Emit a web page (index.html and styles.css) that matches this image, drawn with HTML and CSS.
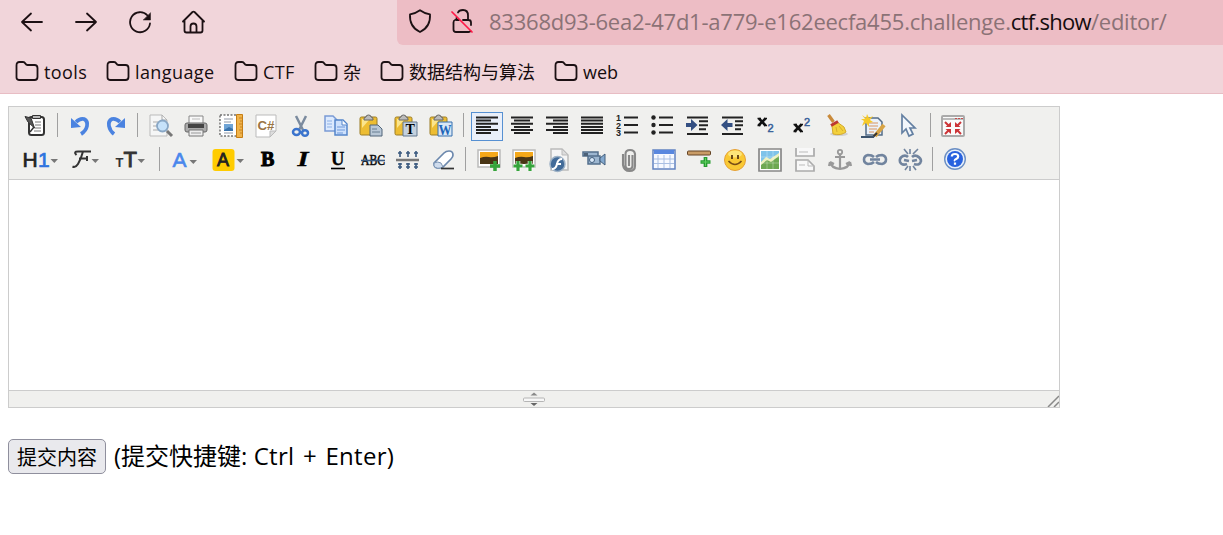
FILE: index.html
```
<!DOCTYPE html>
<html lang="zh-CN">
<head>
  <meta charset="UTF-8" />
  <title>editor</title>
  <link rel="stylesheet" href="styles.css">
</head>
<body>

<header class="browser">
  <div class="navbar">
    <div class="nav-buttons">
      <svg viewBox="0 0 24 24"><path d="M22 12H2M11 3.500L2 12l9 8.500"/></svg>
      <svg viewBox="0 0 24 24"><path d="M2 12h20M13 3.500l9 8.500-9 8.500"/></svg>
      <svg viewBox="0 0 24 24"><path d="M22 13.500A10 10 0 1 1 19.500 5.500"/><path class="solid" d="M22.500 3v7H15.500z"/></svg>
      <svg viewBox="0 0 24 24"><path d="M1 11.500L10.500 2q1-.8 2 0l9.500 9.500M2.500 10v10.500q0 2 2 2h14q2 0 2-2V10M8.500 22v-5.500q0-3 3-3t3 3v5.500"/></svg>
    </div>
    <div class="urlbar">
      <svg viewBox="0 0 24 24"><path d="M12 1.200Q16.500 4.500 22 5.300C22.500 13 19.500 19.500 12 23 4.500 19.500 1.500 13 2 5.300Q7.500 4.500 12 1.200z"/></svg>
      <svg class="lock" viewBox="0 0 24 24"><path d="M8 3.500Q9 1 13 1q5 0 5 5.500V11h.5q2.500 0 2.500 2.500V16M13 11h5M5 11q-1.500.5-1.500 2.500v7q0 2.500 2.500 2.500h12.500q1.500 0 2-1M6.500 9v2H9"/><path class="slash" d="M2 3l20 20"/></svg>
      <div class="url">83368d93-6ea2-47d1-a779-e162eecfa455.challenge.<b>ctf.show</b>/editor/</div>
    </div>
  </div>
  <div class="bookmarks">
    <div><svg viewBox="0 0 24 20"><path d="M1.500 16.500v-12Q1.500 1 4.500 1H8q1.500 0 2.500 1.800Q11.200 4 12.500 4h7Q22.500 4 22.500 7v9q0 3-3 3h-15q-3 0-3-2.500z"/></svg>tools</div>
    <div><svg viewBox="0 0 24 20"><path d="M1.500 16.500v-12Q1.500 1 4.500 1H8q1.500 0 2.500 1.800Q11.200 4 12.500 4h7Q22.500 4 22.500 7v9q0 3-3 3h-15q-3 0-3-2.500z"/></svg>language</div>
    <div><svg viewBox="0 0 24 20"><path d="M1.500 16.500v-12Q1.500 1 4.500 1H8q1.500 0 2.500 1.800Q11.200 4 12.500 4h7Q22.500 4 22.500 7v9q0 3-3 3h-15q-3 0-3-2.500z"/></svg>CTF</div>
    <div><svg viewBox="0 0 24 20"><path d="M1.500 16.500v-12Q1.500 1 4.500 1H8q1.500 0 2.500 1.800Q11.200 4 12.500 4h7Q22.500 4 22.500 7v9q0 3-3 3h-15q-3 0-3-2.500z"/></svg><span class="cjk">杂</span></div>
    <div><svg viewBox="0 0 24 20"><path d="M1.500 16.500v-12Q1.500 1 4.500 1H8q1.500 0 2.500 1.800Q11.200 4 12.500 4h7Q22.500 4 22.500 7v9q0 3-3 3h-15q-3 0-3-2.500z"/></svg><span class="cjk">数据结构与算法</span></div>
    <div><svg viewBox="0 0 24 20"><path d="M1.500 16.500v-12Q1.500 1 4.500 1H8q1.500 0 2.500 1.800Q11.200 4 12.500 4h7Q22.500 4 22.500 7v9q0 3-3 3h-15q-3 0-3-2.500z"/></svg><span class="cjk">web</span></div>
  </div>
</header>

<main>
  <div class="editor">
    <div class="toolbar">
      <div class="row">
        <!-- source -->
        <span class="btn"><svg viewBox="0 0 24 24"><rect x="6" y="3" width="15" height="18" rx="2.500" fill="#fff" stroke="#333" stroke-width="2"/><path d="M9.500 4.500v-3h8v3z" fill="#bbb" stroke="#333"/><path d="M12 8h6M12 11h6M12 14h6M11 17h7" stroke="#777"/><path d="M2 2.500l6 1.500 3.500 10L5 8z" fill="#555" stroke="#333"/><path d="M11 13l-4 5" stroke="#333" stroke-width="1.500"/></svg></span>
        <span class="sep"></span>
        <!-- undo / redo -->
        <span class="btn"><svg viewBox="0 0 24 24"><path d="M8 8q4-4 8-3 4 2 3 7-1 5-6 8" fill="none" stroke="#4b83e0" stroke-width="3.800"/><path d="M3 4v10l10-1z" fill="#4b83e0"/></svg></span>
        <span class="btn"><svg viewBox="0 0 24 24"><path d="M17 8q-4-4-8-3-4 2-3 7 1 5 5 8" fill="none" stroke="#4b83e0" stroke-width="3.800"/><path d="M22 4v10l-10-1z" fill="#4b83e0"/></svg></span>
        <span class="sep"></span>
        <!-- preview -->
        <span class="btn"><svg viewBox="0 0 24 24"><path d="M1 1h12l5 5v16H1z" fill="#f5f6f6" stroke="#bbb"/><path d="M13 1v5h5M4 8h5M4 12h4M4 16h5" fill="none" stroke="#aaa"/><circle cx="13.500" cy="12" r="5.500" fill="#c6e2fa" stroke="#89a7c5" stroke-width="1.800"/><path d="M18 17l5 5" stroke="#777" stroke-width="3"/></svg></span>
        <!-- print -->
        <span class="btn"><svg viewBox="0 0 24 24"><path d="M5 2h14v8H5z" fill="#f9f9f9" stroke="#888"/><path d="M8 5h8" stroke="#bbb"/><rect x="1" y="9" width="22" height="9" rx="2" fill="#aaa" stroke="#666"/><path d="M4 10h16v4H4z" fill="#444"/><path d="M5 16h14v6H5z" fill="#eee" stroke="#777"/><path d="M7 19h10" stroke="#999"/></svg></span>
        <!-- template -->
        <span class="btn"><svg viewBox="0 0 24 24"><rect x="1" y="1" width="17" height="21" fill="#fff" stroke="#333" stroke-dasharray="2 1.500"/><path d="M5 5h9M5 8h7M5 19h9" stroke="#b7bcc5" stroke-width="1.500"/><path d="M5 10h9v7H5z" fill="#6fa4d5"/><path d="M5 16l5-3 4 2v2H5z" fill="#3973ac"/><path d="M17.500 .5h6v23h-6z" fill="#f0b34a" stroke="#c67e14"/><path d="M20 4h3M21 7h2M20 10h3M21 13h2M20 16h3M21 19h2" stroke="#c98422"/></svg></span>
        <!-- code -->
        <span class="btn"><svg viewBox="0 0 24 24"><path d="M2 1h20v16l-6 6H2z" fill="#fff" stroke="#bbb"/><path d="M16 23v-6h6z" fill="#ddd" stroke="#bbb"/><text x="3.500" y="16" font-size="12" font-weight="bold" fill="#9a7546" textLength="17" lengthAdjust="spacingAndGlyphs">C#</text></svg></span>
        <!-- cut -->
        <span class="btn"><svg viewBox="0 0 24 24"><path d="M7 2l7 14M17 2l-7 14" stroke="#7b8b9e" stroke-width="2.500"/><ellipse cx="7.500" cy="18" rx="3.500" ry="3" fill="none" stroke="#3b74cd" stroke-width="2.500"/><ellipse cx="16" cy="19" rx="3" ry="2.800" fill="none" stroke="#3b74cd" stroke-width="2.500"/></svg></span>
        <!-- copy -->
        <span class="btn"><svg viewBox="0 0 24 24"><path d="M1 2h8l4 4v11H1z" fill="#dceafe" stroke="#7a9bd5" stroke-width="1.500"/><path d="M3 7h5M3 10h5M3 13h5" stroke="#8db0e5"/><path d="M11 6h8l4 4v11H11z" fill="#cee1fc" stroke="#5485ca" stroke-width="1.500"/><path d="M18 6v5h5" fill="#fff" stroke="#5485ca"/><path d="M13 13h8M13 16h8M13 19h6" stroke="#6e99da"/></svg></span>
        <!-- paste -->
        <span class="btn"><svg viewBox="0 0 24 24"><rect x="1" y="3" width="17" height="18" rx="1.500" fill="#edbd32" stroke="#9b7c26"/><path d="M3 5l8 0-8 9z" fill="#fbe58d"/><path d="M5 5q0-2 2-2 0-2 2.500-2T12 3q2 0 2 2v1H5z" fill="#bbb" stroke="#666"/><path d="M11 11h8l4 4v7H11z" fill="#b9c8d7" stroke="#506579"/><path d="M13 15h5M13 18h8" stroke="#697e92"/></svg></span>
        <!-- paste plain text -->
        <span class="btn"><svg viewBox="0 0 24 24"><rect x="1" y="3" width="17" height="18" rx="1.500" fill="#edbd32" stroke="#9b7c26"/><path d="M3 5l8 0-8 9z" fill="#fbe58d"/><path d="M5 5q0-2 2-2 0-2 2.500-2T12 3q2 0 2 2v1H5z" fill="#bbb" stroke="#666"/><path d="M9 8h14v14H9z" fill="#c4d1de" stroke="#637991"/><text class="serif" x="11.500" y="20" font-size="14" font-weight="bold">T</text></svg></span>
        <!-- paste from word -->
        <span class="btn"><svg viewBox="0 0 24 24"><rect x="1" y="3" width="17" height="18" rx="1.500" fill="#edbd32" stroke="#9b7c26"/><path d="M3 5l8 0-8 9z" fill="#fbe58d"/><path d="M5 5q0-2 2-2 0-2 2.500-2T12 3q2 0 2 2v1H5z" fill="#bbb" stroke="#666"/><path d="M9 8h14v14H9z" fill="#d9e7f5" stroke="#356fae"/><text class="serif" x="9.500" y="20.500" font-size="15" font-weight="bold" fill="#2165b8" textLength="13" lengthAdjust="spacingAndGlyphs">W</text></svg></span>
        <span class="sep"></span>
        <!-- alignment -->
        <span class="btn selected"><svg class="lines" viewBox="0 0 24 24"><path d="M1 3.500h22M1 6.500h15M1 9.800h22M1 13h15M1 16h22M1 19h15"/></svg></span>
        <span class="btn"><svg class="lines" viewBox="0 0 24 24"><path d="M1 3.500h22M4 6.500h16M1 9.800h22M4 13h16M1 16h22M4 19h16"/></svg></span>
        <span class="btn"><svg class="lines" viewBox="0 0 24 24"><path d="M1 3.500h22M8 6.500h15M1 9.800h22M8 13h15M1 16h22M8 19h15"/></svg></span>
        <span class="btn"><svg class="lines" viewBox="0 0 24 24"><path d="M1 3.500h22M1 6.500h22M1 9.800h22M1 13h22M1 16h22M1 19h22"/></svg></span>
        <!-- lists -->
        <span class="btn"><svg class="lines" viewBox="0 0 24 24"><path d="M9 3.500h14M9 11h14M9 18.500h14"/><g class="nums"><text x="1" y="7">1</text><text x="1" y="14.500">2</text><text x="1" y="22">3</text></g></svg></span>
        <span class="btn"><svg class="lines" viewBox="0 0 24 24"><path d="M9 3.500h14M9 11h14M9 18.500h14"/><circle cx="3.500" cy="3.500" r="2.200"/><circle cx="3.500" cy="11" r="2.200"/><circle cx="3.500" cy="18.500" r="2.200"/></svg></span>
        <!-- indent -->
        <span class="btn"><svg class="lines" viewBox="0 0 24 24"><path d="M2 3.500h21M14 7.300h9M14 11.300h9M14 15.300h7M2 20h21"/><path class="arrow" d="M1 9h5V5l6.500 6L6 17v-4H1z"/></svg></span>
        <span class="btn"><svg class="lines" viewBox="0 0 24 24"><path d="M2 3.500h21M15 7.300h8M15 11.300h8M15 15.300h6M2 20h21"/><path class="arrow" d="M12.500 9h-5V5L1 11l6.500 6v-4h5z"/></svg></span>
        <!-- subscript / superscript -->
        <span class="btn"><svg viewBox="0 0 24 24"><path d="M4 4.500l6.500 7M10.500 4.500l-7 7" stroke="#111" stroke-width="2.600"/><path d="M2.500 4.500h3.500M9 4.500h3M2.500 11.500h3M9 11.500h3" stroke="#111" stroke-width="1.600"/><text x="12.500" y="18" font-size="11" fill="#375f99" stroke="#375f99" stroke-width=".5">2</text></svg></span>
        <span class="btn"><svg viewBox="0 0 24 24"><path d="M4 10.500l6.500 7M10.500 10.500l-7 7" stroke="#111" stroke-width="2.600"/><path d="M2.500 10.500h3.500M9 10.500h3M2.500 17.500h3M9 17.500h3" stroke="#111" stroke-width="1.600"/><text x="13" y="12" font-size="11" fill="#375f99" stroke="#375f99" stroke-width=".5">2</text></svg></span>
        <!-- clear format -->
        <span class="btn"><svg viewBox="0 0 24 24"><ellipse cx="13" cy="20" rx="9" ry="2" fill="#d2d2d2"/><path d="M2.500 1l5 7" stroke="#c98a3a" stroke-width="3.200"/><path d="M11 8l7 5 2 5q-5 4-13 2l-1-8z" fill="#f3d13c" stroke="#d3a92c"/><path d="M5 11.500l7-4" stroke="#bd3930" stroke-width="3"/><path d="M10 13l1 5M13 12l4 5" stroke="#d6ae2c"/></svg></span>
        <!-- quick format -->
        <span class="btn"><svg viewBox="0 0 24 24"><path d="M5 4h12l4 4v13H5z" fill="#eaf1fa" stroke="#536c88" stroke-width="1.500"/><path d="M8 9h9M8 12h9M8 15h8M8 18h5" stroke="#d89460"/><path d="M1 1l4 3 1-4 2 4 4-2-3 4 3 2-4 1v4L5 9l-4 3 2-5-3-2h4z" fill="#f6c928"/><path d="M23 11l-9 11" stroke="#d8a445" stroke-width="4"/><path d="M16 19l-4 4" stroke="#333" stroke-width="2"/><path d="M0 23h13" stroke="#3d546e" stroke-width="2"/></svg></span>
        <!-- select all -->
        <span class="btn"><svg viewBox="0 0 24 24"><path d="M6 1v18l4-4 3 7 4-2-3-6h5z" fill="#f3f7fc" stroke="#6480a2" stroke-width="1.700"/></svg></span>
        <span class="sep"></span>
        <!-- fullscreen -->
        <span class="btn"><svg viewBox="0 0 24 24"><rect x="1" y="2" width="22" height="20" rx="1" fill="#fafafa" stroke="#aaa" stroke-width="2"/><path d="M2 5h20" stroke="#bbb" stroke-width="2"/><path d="M14 4.500h2M17 4.500h2M20 4.500h2" stroke="#c54c4c"/><path d="M10 8v5H4.500zM14 8v5h5.500zM10 20v-5H4.500zM14 20v-5h5.500z" fill="#cc3437"/><path d="M4 8l4 4M20 8l-4 4M4 20l4-4M20 20l-4-4" stroke="#cc3437" stroke-width="2"/></svg></span>
      </div>
      <div class="row">
        <span class="btn wide"><svg viewBox="0 0 36 24"><text x="-.5" y="18.500" font-size="21" fill="#222" stroke="#222" stroke-width=".7">H<tspan x="15" fill="#2f73df" stroke="#2f73df">1</tspan></text><path d="M27.500 11h7.500l-3.700 4z" fill="#777"/></svg></span>
        <span class="btn wide"><svg viewBox="0 0 36 24"><path d="M8.500 7Q5 3.500 10 3.500h13M15 3.500Q13 11 10 16q-2.500 4-5.500 2.500M11 10.500h8M19 8v5" fill="none" stroke="#333" stroke-width="2"/><path d="M23.500 11h7.500l-3.700 4z" fill="#777"/></svg></span>
        <span class="btn wide"><svg viewBox="0 0 36 24"><text x="1.500" y="18.500" font-size="13" font-weight="bold" fill="#333">T</text><text x="9.500" y="18.500" font-size="22" fill="#333" stroke="#333" stroke-width=".9">T</text><path d="M23.500 11h7.500l-3.700 4z" fill="#777"/></svg></span>
        <span class="sep"></span>
        <span class="btn color"><svg viewBox="0 0 33 24"><text x="2.500" y="19" font-size="21" fill="#4987ec" stroke="#4987ec" stroke-width=".6">A</text><path d="M19.500 12h7.500l-3.700 4z" fill="#777"/></svg></span>
        <span class="btn color"><svg viewBox="0 0 33 24"><rect x="-.5" width="22" height="22" y="1" rx="3" fill="#fc0"/><text x="4" y="18" font-size="18" fill="#222" stroke="#222" stroke-width=".8">A</text><path d="M23.500 11h7.500l-3.700 4z" fill="#777"/></svg></span>
        <span class="btn"><svg viewBox="0 0 24 24"><text class="serif" x="5" y="18" font-size="20" font-weight="bold" stroke="#000" stroke-width="1">B</text></svg></span>
        <span class="btn"><svg viewBox="0 0 24 24"><text class="serif" x="6.500" y="18" font-size="20" font-weight="bold" font-style="italic" stroke="#000" stroke-width=".4" textLength="11" lengthAdjust="spacingAndGlyphs">I</text></svg></span>
        <span class="btn"><svg viewBox="0 0 24 24"><text class="serif" x="5" y="17" font-size="18.500" font-weight="bold" stroke="#000" stroke-width=".3">U</text><path d="M5 20.500h14" stroke="#000" stroke-width="1.600"/></svg></span>
        <span class="btn"><svg viewBox="0 0 24 24"><text class="serif" x="0" y="16.500" font-size="14" textLength="24" lengthAdjust="spacingAndGlyphs" stroke="#111" stroke-width=".5">ABC</text><path d="M0 12.500h24" stroke="#3b5b82" stroke-width="1.600"/></svg></span>
        <!-- line height -->
        <span class="btn"><svg viewBox="0 0 24 24"><path d="M0 12h23" stroke="#777" stroke-width="2.500"/><path d="M4 3v6M12 3v6M20 3v6M4 15v6M12 15v6M20 15v6M2 5h4M10 5h4M18 5h4M2 19h4M10 19h4M18 19h4M2 16h4M10 16h4M18 16h4" stroke="#3a597e" stroke-width="1.600"/></svg></span>
        <!-- eraser -->
        <span class="btn"><svg viewBox="0 0 24 24"><path d="M2 15L12 5q2-2 5-2 4 0 4 4 0 2-2 4l-8 8q-2 1-5 1-4 0-4-5z" fill="#fff" stroke="#6c88ad" stroke-width="1.700"/><path d="M2 15q4-2 7 0l2 4q-6 3-9-1z" fill="#cfdced" stroke="#7892b2"/><path d="M9 20.500h13" stroke="#333" stroke-width="1.700"/></svg></span>
        <span class="sep"></span>
        <!-- image / multi image -->
        <span class="btn"><svg viewBox="0 0 24 24"><path d="M1 2h22v17H1z" fill="#fff" stroke="#bbb" stroke-width="1.500"/><path d="M3 4h18v12H3z" fill="#f5a819"/><path d="M3 10q5-2 9-1t9-1v8H3z" fill="#493515"/><path d="M18 13v10M13 18h10" stroke="#35a43b" stroke-width="3.500"/></svg></span>
        <span class="btn"><svg viewBox="0 0 24 24"><path d="M1 2h22v17H1z" fill="#fff" stroke="#bbb" stroke-width="1.500"/><path d="M3 4h18v12H3z" fill="#f5a819"/><path d="M3 10q5-2 9-1t9-1v8H3z" fill="#493515"/><path d="M6 13v10M1.500 18h9M18 13v10M13.500 18h9" stroke="#fff" stroke-width="4.500"/><path d="M6 13v10M1.500 18h9M18 13v10M13.500 18h9" stroke="#35a43b" stroke-width="3.200"/></svg></span>
        <!-- flash -->
        <span class="btn"><svg viewBox="0 0 24 24"><path d="M4 1h11l6 6v15H4z" fill="#f5f5f5" stroke="#bbb" stroke-width="1.500"/><path d="M15 1v6h6z" fill="#ddd" stroke="#bbb"/><circle cx="10.500" cy="16" r="7.500" fill="#426b99" stroke="#9eb2c6" stroke-width="1.500"/><path d="M15 11q-4 0-5 5t-5 5M9 16h5" fill="none" stroke="#fff" stroke-width="2"/></svg></span>
        <!-- media -->
        <span class="btn"><svg viewBox="0 0 24 24"><path d="M1 4h15v4H1zM6 8h12v8H6z" fill="#9cb6d0" stroke="#536f8c" stroke-width="1.500"/><path d="M18 10l5-4v11l-5-4z" fill="#83a8ce" stroke="#435f7d"/><path d="M2 5h4v3H2z" fill="#4d6278"/><circle cx="10" cy="12" r="2.500" fill="#d9e9fa" stroke="#435f7d"/></svg></span>
        <!-- attachment -->
        <span class="btn"><svg viewBox="0 0 24 24"><path d="M15.500 7v11q0 3-3.500 3t-3.500-3V6q0-4 4.500-4t5 4v12q0 5-5.500 5T6 17V6M12 7v11" fill="none" stroke="#888" stroke-width="2.100"/></svg></span>
        <!-- table -->
        <span class="btn"><svg viewBox="0 0 24 24"><path d="M1 2h22v19H1z" fill="#f6f9ff" stroke="#6183c1" stroke-width="1.500"/><path d="M2 2h20v4H2z" fill="#5887df"/><path d="M6 7v13M12 7v13M18 7v13M2 11h20M2 15.500h20" stroke="#a9bfe3"/></svg></span>
        <!-- horizontal rule -->
        <span class="btn"><svg viewBox="0 0 24 24"><rect x=".5" y="3" width="23" height="4" rx="1" fill="#c99c66" stroke="#654526"/><path d="M18.500 9v10M13.500 14h10" stroke="#269c30" stroke-width="3.700"/><path d="M18.500 10v8M14.500 14h8" stroke="#61cf61"/></svg></span>
        <!-- emoticon -->
        <span class="btn"><svg viewBox="0 0 24 24"><circle cx="12" cy="12" r="10.500" fill="#f9c934" stroke="#e6a136"/><ellipse cx="12" cy="6" rx="7" ry="3.500" fill="#fde578"/><path d="M9 7v4M15 7v4" stroke="#6a4917" stroke-width="2"/><path d="M5.500 13q6.500 7 13 0" fill="none" stroke="#784e16" stroke-width="1.600"/></svg></span>
        <!-- map -->
        <span class="btn"><svg viewBox="0 0 24 24"><path d="M1 1h22v22H1z" fill="#fff" stroke="#888" stroke-width="1.700"/><path d="M3 3h18v18H3z" fill="#7fc3ea"/><path d="M3 14l5-4 4 2 9-6v15H3z" fill="#6ea852"/><path d="M3 14l5-5 4 2 9-6v3l-8 6-4-2-6 5z" fill="#edf0bd"/><path d="M9 3v18M15 3v18M3 9h18M3 15h18" stroke="#fff" stroke-opacity=".3"/></svg></span>
        <!-- page break -->
        <span class="btn"><svg viewBox="0 0 24 24"><path d="M3 0v8h18V0" fill="#f8f8f8" stroke="#aaa" stroke-width="1.700"/><path d="M3 23V12h12l6 6v5z" fill="#f8f8f8" stroke="#aaa" stroke-width="1.700"/><path d="M15 12v6h6M6 4h9M6 17h6" fill="none" stroke="#bbb"/></svg></span>
        <!-- anchor -->
        <span class="btn"><svg viewBox="0 0 24 24"><circle cx="12" cy="4" r="2.200" fill="none" stroke="#999" stroke-width="1.800"/><path d="M12 6v15M7 9h10M2 14q1 6 10 7 9-1 10-7M2 14l-1 4M2 14l4 2M22 14l1 4M22 14l-4 2" fill="none" stroke="#999" stroke-width="2.200"/></svg></span>
        <!-- link / unlink -->
        <span class="btn"><svg class="chain" viewBox="0 0 24 24"><path d="M11 9Q9 7 5 7q-4 1-4 4.500T5 16q4 0 6-2M13 9q2-2 6-2 4 1 4 4.500T19 16q-4 0-6-2M7 11.500h10"/></svg></span>
        <span class="btn"><svg class="chain" viewBox="0 0 24 24"><path d="M10 9Q8 7 5 8q-4 2-3 6 2 4 7 2M6 12l5 1M14 9q2-2 5-1 4 2 4 5-1 5-7 3M19 12l-5 1"/><path class="thin" d="M12 1v5M6 1l4 5M20 1l-5 5M12 23v-5M7 22l3-4M18 22l-3-4"/></svg></span>
        <span class="sep"></span>
        <!-- help -->
        <span class="btn"><svg viewBox="0 0 24 24"><circle cx="12" cy="11" r="10.300" fill="#e9f1fb" stroke="#6b8fc4" stroke-width="1.400"/><circle cx="12" cy="11" r="8" fill="#2862df"/><path d="M8.800 8.500q0-2.500 3.200-2.500t3.200 2.500q0 1.500-2 2.500T12 13M12 14.500v2.200" fill="none" stroke="#fff" stroke-width="2.200"/></svg></span>
      </div>
    </div>
    <div class="edit-area"></div>
    <div class="statusbar">
      <svg class="center" viewBox="0 0 24 16"><path d="M12 1.500l3.500 3h-7z" fill="#888"/><rect x="1.500" y="7" width="21" height="3.500" rx="1" fill="#f7f7f7" stroke="#b5b5b5"/><path d="M12 15l3.500-3h-7z" fill="#666"/></svg>
      <svg class="grip" viewBox="0 0 12 12"><path d="M1 12L12 1M7 12l5-5" stroke="#888" stroke-width="1.500"/></svg>
    </div>
  </div>

  <div class="submit">
    <button>提交内容</button>
    <span>(提交快捷键: <span class="keys">Ctrl + Enter)</span></span>
  </div>
</main>

</body>
</html>
```
FILE: styles.css
```
body {
  margin: 0;
  background: #fff;
  color: #000;
  font-family: "Open Sans", "Noto Sans CJK SC", sans-serif;
}
svg {
  display: block;
  flex: none;
}
.browser {
  height: 93px;
  background: #f1d5da;
  border-bottom: 1px solid #e8bdc4;
  overflow: hidden;
}
.browser svg {
  width: 24px;
  height: 24px;
  fill: none;
  stroke: #1c1013;
  stroke-width: 1.8;
  stroke-linecap: round;
  stroke-linejoin: round;
}
.browser .solid {
  fill: #1c1013;
  stroke-width: 0.5;
}
.browser .slash {
  stroke: #ff1746;
  stroke-width: 1.7;
}
.navbar {
  display: flex;
  height: 45px;
}
.nav-buttons {
  display: flex;
  gap: 30px;
  width: 377px;
  padding: 10px 0 0 20px;
}
.urlbar {
  display: flex;
  flex: 1;
  gap: 18px;
  padding: 9px 0 0 11px;
  background: #edbdc5;
  border-radius: 0 0 0 6px;
}
.url {
  margin-left: -3px;
  line-height: 24px;
  font-size: 22px;
  letter-spacing: -0.23px;
  white-space: nowrap;
  color: #8b7276;
}
.url b {
  font-weight: normal;
  letter-spacing: -0.7px;
  color: #150c0e;
}
.bookmarks {
  display: grid;
  grid-template-columns: 91px 128px 80px 66px 174px 90px;
  padding: 14px 0 0 15px;
  font-size: 18px;
  letter-spacing: 0.4px;
  line-height: 26px;
  color: #150c0e;
}
.bookmarks div {
  display: flex;
  gap: 5px;
  white-space: nowrap;
}
.bookmarks svg {
  height: 20px;
  margin-top: 2px;
}
.cjk {
  letter-spacing: 0;
}
main {
  padding: 12px 8px 0;
}
.editor {
  width: 1050px;
  border: 1px solid #ccc;
}
.toolbar {
  height: 67px;
  padding: 5px 0 0 8.2px;
  background: #f0f0ee;
  border-bottom: 1px solid #ccc;
}
.row {
  display: flex;
  height: 34px;
}
.btn {
  box-sizing: border-box;
  width: 32px;
  height: 29px;
  margin: 0 1.55px;
  padding: 1px 3px;
  border: 1px solid transparent;
}
.btn svg {
  width: 24px;
  height: 24px;
  overflow: visible;
  font-family: "Liberation Sans", sans-serif;
}
.btn .serif {
  font-family: "Liberation Serif", serif;
}
.selected {
  background: #e9effa;
  border-color: #5690d2;
}
.wide {
  width: 42.6px;
}
.wide svg {
  width: 36px;
}
.color {
  width: 39.9px;
}
.color svg {
  width: 33px;
}
.sep {
  width: 1px;
  height: 24px;
  margin: 1px 4.9px 0 4.4px;
  background: #a0a0a0;
}
.lines {
  fill: #222;
  stroke: #222;
  stroke-width: 2;
}
.lines circle {
  stroke: none;
}
.lines .arrow {
  fill: #334f82;
  stroke: none;
}
.nums {
  font-size: 9px;
  font-weight: bold;
  stroke: none;
}
.chain {
  fill: none;
  stroke: #71849e;
  stroke-width: 2.6;
}
.chain .thin {
  stroke-width: 1.6;
}
.edit-area {
  height: 210px;
}
.statusbar {
  display: grid;
  grid-template-columns: 1fr 24px 1fr;
  height: 16px;
  background: #f0f0ee;
  border-top: 1px solid #ccc;
}
.center {
  grid-column: 2;
  width: 24px;
  height: 16px;
}
.grip {
  justify-self: end;
  align-self: end;
  width: 12px;
  height: 12px;
}
.submit {
  display: flex;
  gap: 8px;
  margin-top: 31px;
}
.submit button {
  box-sizing: border-box;
  width: 98px;
  height: 35px;
  padding: 0;
  border: 1px solid #8f8f9d;
  border-radius: 5px;
  background: #e9e9ed;
  color: #000;
  font-family: inherit;
  font-size: 20px;
}
.submit span {
  font-size: 24px;
  line-height: 34px;
}
.submit .keys {
  letter-spacing: 0.3px;
  word-spacing: 2px;
}
```
